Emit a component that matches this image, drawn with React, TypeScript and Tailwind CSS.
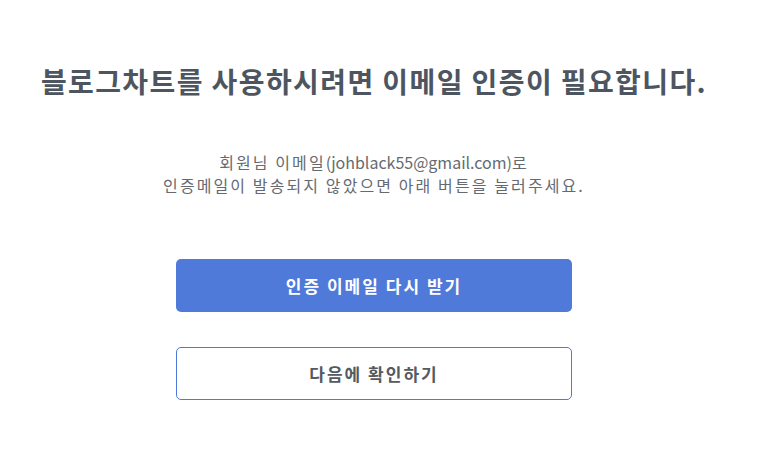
import React from 'react';

const App: React.FC = () => {
  return (
    <div
      className="w-[771px] h-[452px] bg-white flex justify-start"
      style={{ fontFamily: '"Noto Sans CJK KR", "Noto Sans", sans-serif' }}
    >
      <div className="w-[748px] flex flex-col items-center pt-[62px]">
        <h1 className="text-[28px] leading-[38px] font-bold text-[#4d5561] tracking-[1.4px]">
          블로그차트를 사용하시려면 이메일 인증이 필요합니다.
        </h1>
        <p className="mt-[51px] text-[16px] leading-[23px] text-[#666a70] text-center">
          <span className="tracking-[2.1px]">회원님 이메일</span>(johblack55@gmail.com)
          <span className="tracking-[2.1px]">로</span>
          <br />
          <span className="tracking-[2.1px]">인증메일이 발송되지 않았으면 아래 버튼을 눌러주세요.</span>
        </p>
        <button className="mt-[62px] w-[396px] h-[53px] rounded-[5px] bg-[#4f7ad9] text-white text-[17px] font-bold tracking-[2px]">
          인증 이메일 다시 받기
        </button>
        <button className="mt-[35px] w-[396px] h-[53px] rounded-[5px] border border-[#4f7ad9] bg-white text-[#555a60] text-[17px] font-bold tracking-[2px]">
          다음에 확인하기
        </button>
      </div>
    </div>
  );
};

export default App;
